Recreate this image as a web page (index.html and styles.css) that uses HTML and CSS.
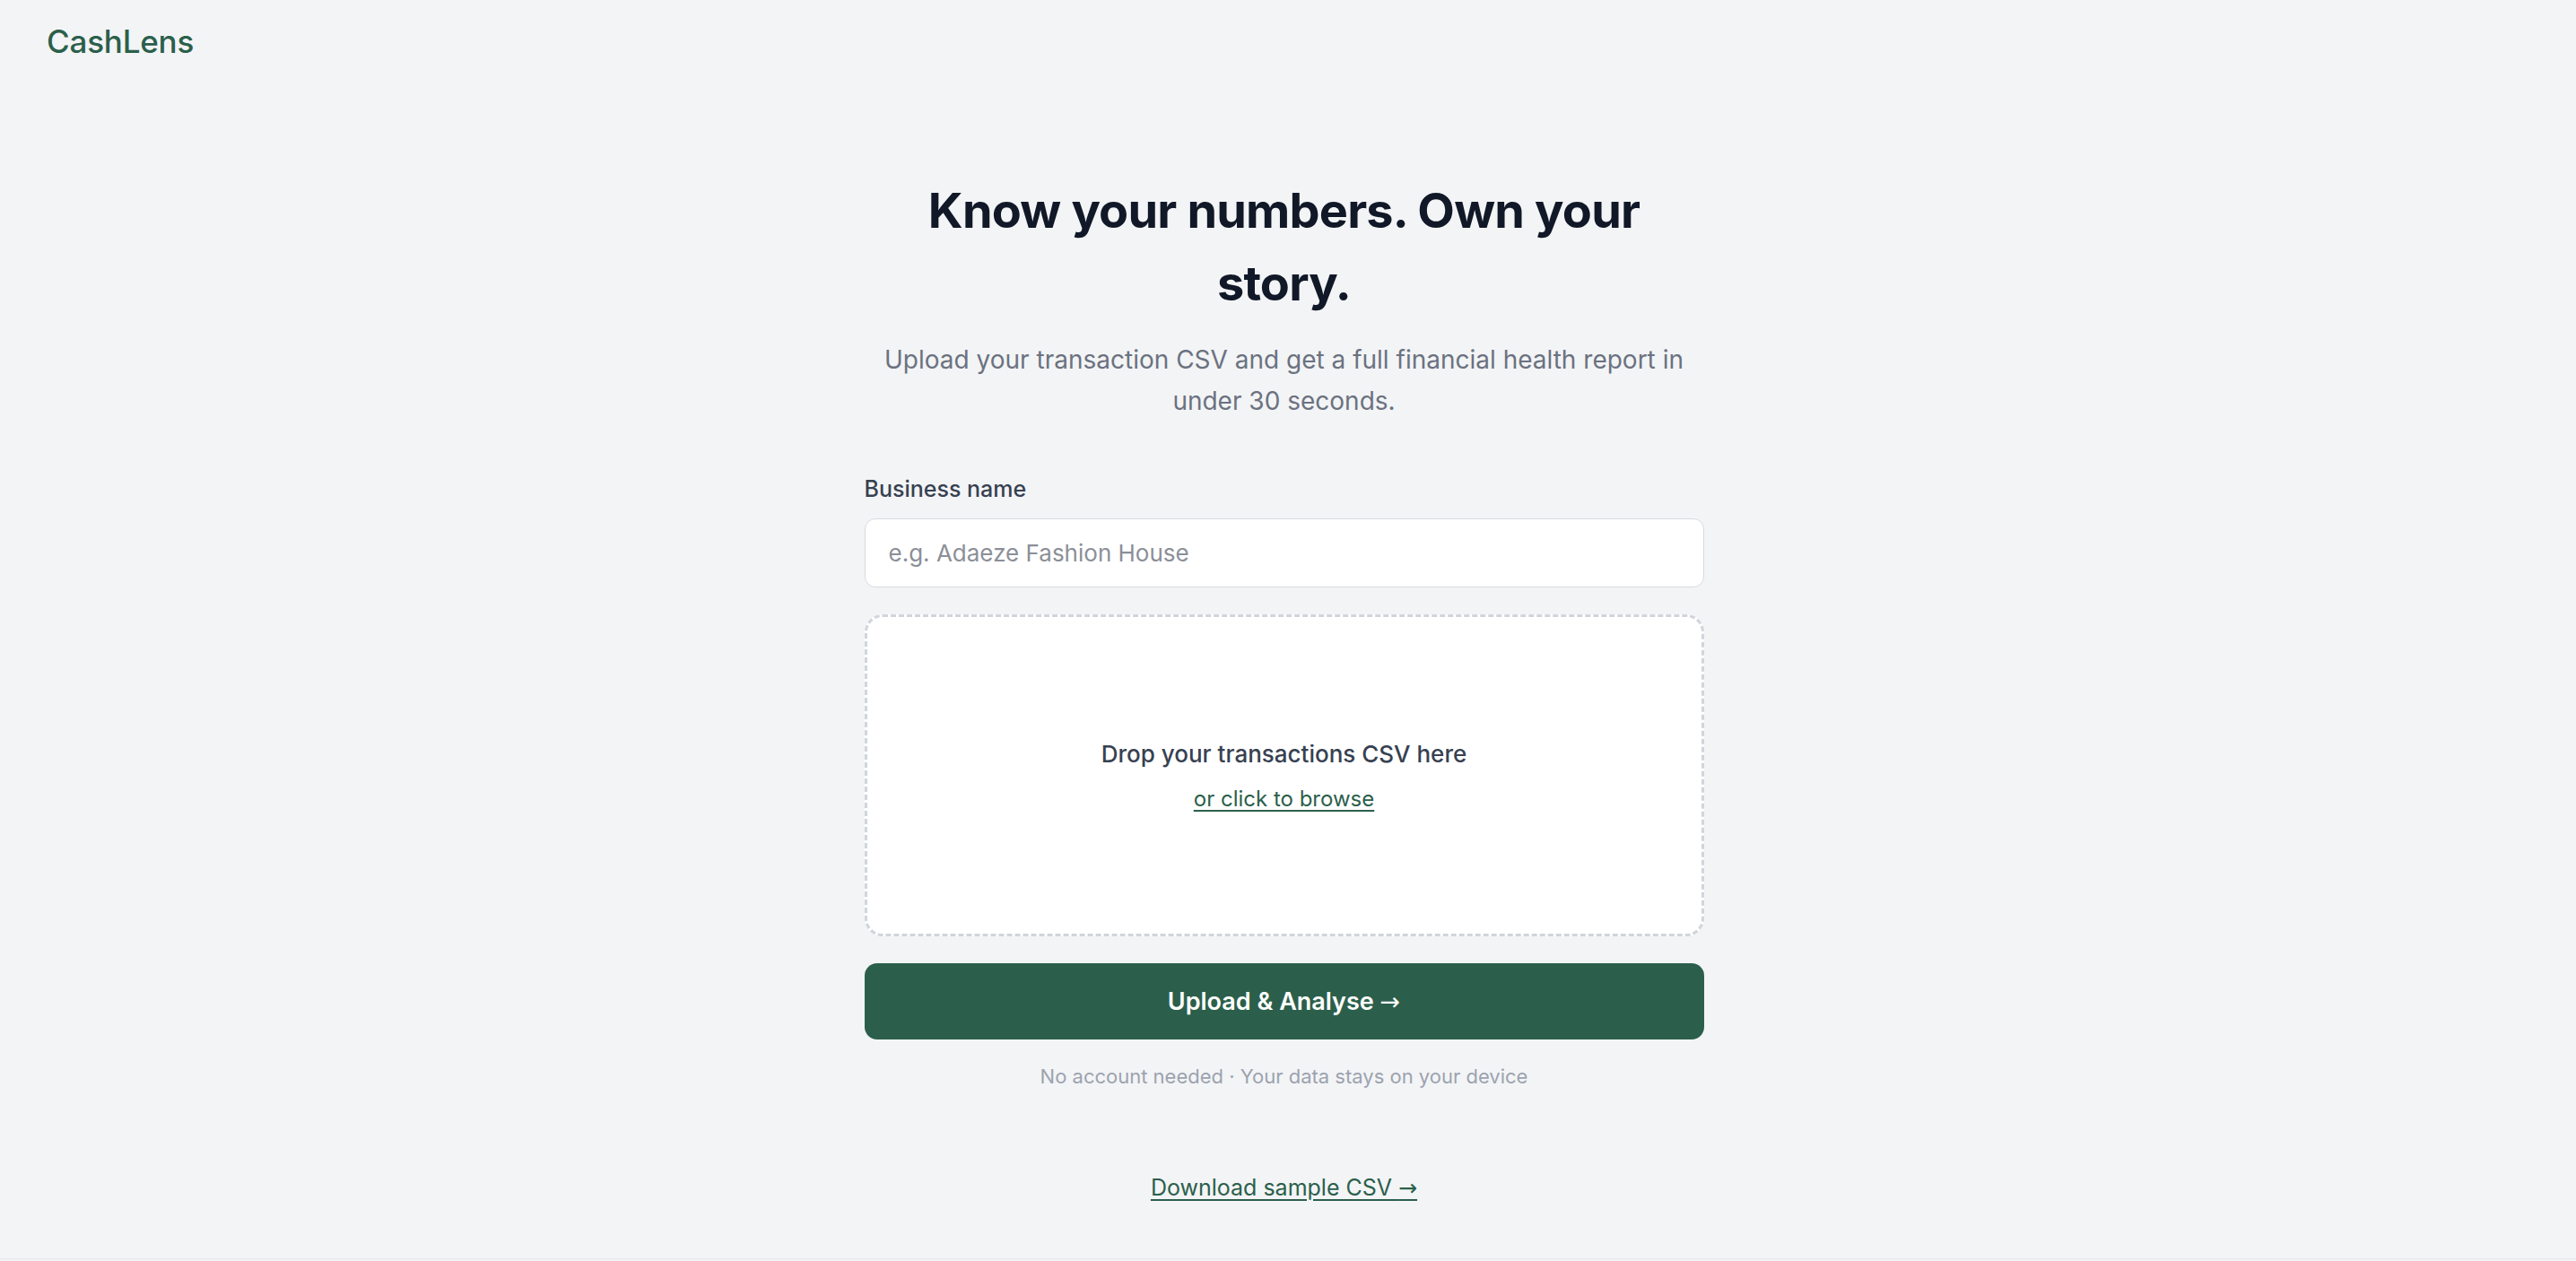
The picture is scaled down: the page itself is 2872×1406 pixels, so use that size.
FILE: index.html
```html
<!DOCTYPE html>
<html lang="en">
<head>
<meta charset="utf-8">
<title>CashLens</title>
<link rel="stylesheet" href="styles.css">
</head>
<body>
<header class="topbar">
  <div class="logo">CashLens</div>
</header>
<main class="main">
  <div class="panel">
    <h1 class="title">Know your numbers. Own your story.</h1>
    <p class="subtitle">Upload your transaction CSV and get a full financial health report in under 30 seconds.</p>
    <label class="label" for="biz">Business name</label>
    <input class="input" id="biz" type="text" placeholder="e.g. Adaeze Fashion House">
    <div class="dropzone">
      <div class="drop-title">Drop your transactions CSV here</div>
      <a class="drop-link" href="#">or click to browse</a>
    </div>
    <button class="btn" type="button">Upload &amp; Analyse <span class="arrow">→</span></button>
    <p class="note">No account needed · Your data stays on your device</p>
    <a class="sample" href="#">Download sample CSV <span class="arrow">→</span></a>
  </div>
</main>
<footer class="footer"></footer>
</body>
</html>
```

FILE: styles.css
```css
* { box-sizing: border-box; }
html, body { margin: 0; padding: 0; }
body {
  background: #f3f4f6;
  font-family: Inter, "Noto Sans", "Liberation Sans", sans-serif;
  color: #111827;
}
.topbar {
  padding: 20px 52px;
}
.logo {
  font-size: 35px;
  line-height: 52px;
  font-weight: 500;
  color: #2b5f4b;
  letter-spacing: -0.2px;
}
.main {
  display: flex;
  justify-content: center;
  padding-right: 9px;
}
.panel {
  width: 936px;
  display: flex;
  flex-direction: column;
  align-items: stretch;
}
.title {
  margin: 102px 0 0;
  font-size: 54px;
  line-height: 81px;
  font-weight: 700;
  text-align: center;
  color: #111827;
  letter-spacing: -0.8px;
}
.subtitle {
  margin: 22px 0 0;
  font-size: 28px;
  line-height: 46px;
  color: #6b7280;
  text-align: center;
  padding: 0 20px;
}
.label {
  margin-top: 59px;
  font-size: 25px;
  line-height: 32px;
  font-weight: 500;
  color: #374151;
}
.input {
  margin-top: 17px;
  height: 77px;
  border: 1.5px solid #d7dae0;
  border-radius: 12px;
  background: #fff;
  padding: 0 26px;
  font-family: inherit;
  font-size: 26px;
  color: #111827;
  outline: none;
}
.input::placeholder { color: #8b8f98; }
.dropzone {
  margin-top: 30px;
  height: 359px;
  border: 3px dashed #d1d5db;
  border-radius: 20px;
  background: #fff;
  display: flex;
  flex-direction: column;
  align-items: center;
  justify-content: center;
  gap: 16px;
}
.drop-title {
  font-size: 26px;
  line-height: 36px;
  font-weight: 500;
  color: #374151;
}
.drop-link {
  font-size: 24px;
  line-height: 32px;
  color: #2b5f4b;
  text-decoration: underline;
  text-underline-offset: 4px;
}
.btn {
  margin-top: 30px;
  height: 85px;
  border: 0;
  border-radius: 14px;
  background: #2b5f4b;
  color: #fff;
  font-family: inherit;
  font-size: 27px;
  font-weight: 600;
}
.arrow {
  font-family: "DejaVu Sans", sans-serif;
  font-weight: 400;
}
.note {
  margin: 25px 0 0;
  font-size: 22px;
  line-height: 32px;
  color: #9ca3af;
  text-align: center;
}
.sample {
  margin-top: 90px;
  align-self: center;
  font-size: 25px;
  line-height: 36px;
  color: #2b5f4b;
  text-decoration: underline;
  text-underline-offset: 4px;
}
.footer {
  margin-top: 60px;
  border-top: 1px solid #e5e7eb;
  height: 80px;
}
```
